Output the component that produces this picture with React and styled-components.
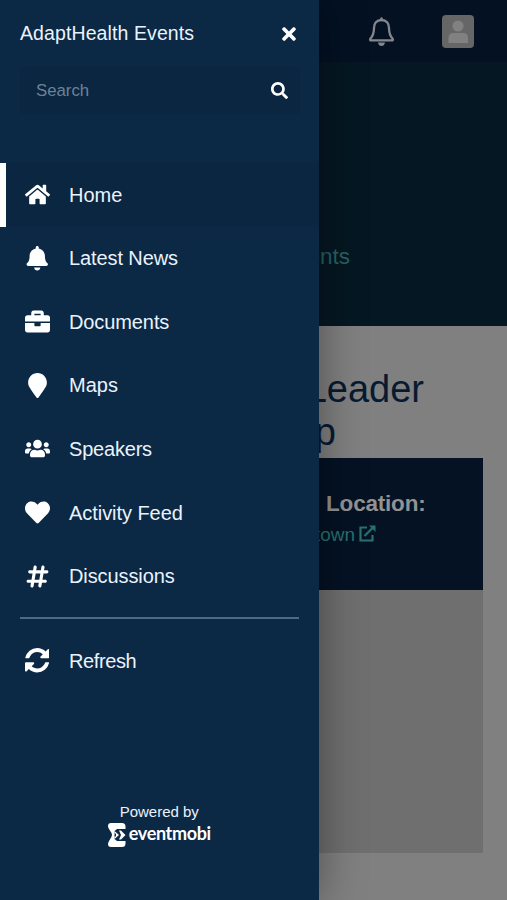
import React from 'react';
import styled, { createGlobalStyle } from 'styled-components';
import { FaHome, FaBell, FaBriefcase, FaMapMarker, FaUsers, FaHeart, FaTimes, FaSearch } from 'react-icons/fa';
import { FaHashtag } from 'react-icons/fa6';

const Global = createGlobalStyle`
  * { box-sizing: border-box; }
  body { margin: 0; background: #808080; font-family: "Liberation Sans", Arial, sans-serif; }
`;

const Screen = styled.div`
  position: relative;
  width: 507px;
  height: 900px;
  overflow: hidden;
  background: #808080;
`;

const Page = styled.div`
  display: flex;
  flex-direction: column;
  height: 100%;
`;

const TopBar = styled.header`
  display: flex;
  flex: none;
  align-items: center;
  justify-content: flex-end;
  gap: 47px;
  height: 62px;
  padding-right: 33px;
  background: #031123;
  svg { display: block; }
`;

const Banner = styled.section`
  flex: none;
  height: 264px;
  padding: 181px 157px 0 0;
  background: #051722;
  color: #286161;
  font-size: 22.5px;
  line-height: 28px;
  text-align: right;
`;

const Title = styled.h1`
  display: flex;
  flex: none;
  flex-direction: column;
  height: 132px;
  margin: 0;
  padding: 42px 83px 0 0;
  color: #081a31;
  font-size: 38px;
  font-weight: 400;
  line-height: 43px;
  text-align: right;
`;

const TitleEnd = styled.span`
  padding-right: 88px;
`;

const InfoCard = styled.section`
  display: flex;
  flex: none;
  flex-direction: column;
  width: 457.5px;
  height: 131.5px;
  margin-left: 25px;
  padding: 32px 57px 0 0;
  background: #041224;
  align-items: flex-end;
`;

const InfoLabel = styled.strong`
  color: #929292;
  font-size: 22.5px;
  line-height: 28px;
  letter-spacing: -0.2px;
`;

const InfoLink = styled.span`
  display: flex;
  gap: 4px;
  margin: 2px 49.5px 0 0;
  color: #297170;
  font-size: 19px;
  line-height: 29px;
  svg { margin-top: 5px; }
`;

const MediaBlock = styled.section`
  flex: none;
  width: 457.5px;
  height: 263.5px;
  margin-left: 25px;
  background: #6f6f6f;
`;

const Drawer = styled.aside`
  position: absolute;
  inset: 0 auto 0 0;
  display: flex;
  flex-direction: column;
  width: 318.5px;
  background: #0b2845;
  color: #eaf3fc;
  box-shadow: 0 0 42px rgba(0, 0, 0, 0.4);
`;

const DrawerHeader = styled.div`
  display: flex;
  flex: none;
  align-items: center;
  justify-content: space-between;
  height: 67px;
  padding: 0 20px 0 20px;
  font-size: 19.5px;
  svg { color: #fff; }
`;

const DrawerTitle = styled.span`
  letter-spacing: 0.1px;
`;

const SearchBox = styled.div`
  display: flex;
  flex: none;
  align-items: center;
  justify-content: space-between;
  height: 47px;
  margin: 0 19px 0 20px;
  padding: 0 12px 0 16px;
  background: #0b2641;
  color: #6c8299;
  font-size: 16.8px;
  svg { color: #fff; }
`;

const Nav = styled.nav`
  display: flex;
  flex: none;
  flex-direction: column;
  margin-top: 49px;
`;

const NavItem = styled.a`
  display: flex;
  align-items: center;
  height: 63.55px;
  border-left: 6px solid ${({ $active }) => ($active ? '#fff' : 'transparent')};
  background: ${({ $active }) => ($active ? '#0b2641' : 'transparent')};
  font-size: 20px;
`;

const IconCell = styled.span`
  display: flex;
  flex: none;
  justify-content: center;
  width: 26px;
  margin: 0 19px 0 18px;
  color: #fff;
`;

const Label = styled.span`
  padding-top: 1px;
  letter-spacing: ${({ $tracking }) => $tracking || 0}px;
`;

const Divider = styled.hr`
  width: 279px;
  height: 2px;
  margin: 9px 0 10px 20px;
  border: 0;
  background: #4b6a85;
`;

const Footer = styled.footer`
  display: flex;
  flex: none;
  flex-direction: column;
  align-items: center;
  margin-top: 110px;
  font-size: 15px;
  line-height: 20px;
`;

const Brand = styled.div`
  display: flex;
  align-items: center;
  gap: 3px;
  height: 25px;
  color: #fff;
`;

const Wordmark = styled.span`
  padding-bottom: 3px;
  font-family: Lato, sans-serif;
  font-size: 18px;
  font-weight: 700;
  line-height: 20px;
  letter-spacing: -0.35px;
`;

const BellOutline = () => (
  <svg width="28" height="31" viewBox="0 0 28 31" fill="none" stroke="#84888d" strokeWidth="2.300" strokeLinejoin="round">
    <path d="M14.500 4C9.500 4 7 7.500 7 12C7 18 5.500 20.500 3.200 23V24.300H25.800V23C23.500 20.500 22 18 22 12C22 7.500 19.500 4 14.500 4Z" />
    <path d="M14.500 2.300V4" strokeLinecap="round" />
    <path d="M11 26.500H18Q17.300 30 14.500 30T11 26.500Z" fill="#84888d" stroke="none" />
  </svg>
);

const Avatar = () => (
  <svg width="32" height="33" viewBox="0 0 32 33">
    <rect width="32" height="33" rx="4" fill="#666" />
    <circle cx="16" cy="11" r="5.600" fill="#818181" />
    <path d="M6.500 28V23Q6.500 18 11.500 18H21Q26 18 26 23V28Z" fill="#818181" />
  </svg>
);

const ExternalLink = () => (
  <svg width="17" height="17" viewBox="0 0 17 17" fill="none" stroke="currentColor" strokeWidth="2.200">
    <path d="M8 2.500H1.500V15.500H13.500V10M5.500 11L14 2.500" />
    <path d="M10 .5H16.500V7Z" fill="currentColor" stroke="none" />
  </svg>
);

const RefreshIcon = () => (
  <svg width="24.500" height="24.500" viewBox="0 0 1536 1536" fill="currentColor">
    <path d="M1511 928q0 5-1 7-64 268-268 434.500T764 1536q-146 0-282.500-55T238 1324l-129 129q-19 19-45 19t-45-19-19-45V960q0-26 19-45t45-19h448q26 0 45 19t19 45-19 45l-137 137q71 66 161 102t187 36q134 0 250-65t186-179q11-17 53-117 8-23 30-23h192q13 0 22.500 9.500t9.500 22.500zm25-800v448q0 26-19 45t-45 19h-448q-26 0-45-19t-19-45 19-45l138-138Q969 256 768 256q-134 0-250 65T332 500q-11 17-53 117-8 23-30 23H50q-13 0-22.500-9.500T18 608v-7q65-268 270-434.500T768 0q146 0 284 55.500T1297 212l130-129q19-19 45-19t45 19 19 45z" />
  </svg>
);

const BrandMark = () => (
  <svg width="18" height="24" viewBox="0 0 18 24">
    <path d="M3 0H14Q17.500 0 17.500 3.500V6H9L6.500 8V16L9 18H17.500V20.500Q17.500 24 14 24H3Q0 24 0 21Q0 19.500 1.300 17.500Q4 14 4 12T1.300 6.500Q0 4.500 0 3Q0 0 3 0Z" fill="#fff" />
    <path d="M6.500 8L11 12L6.500 16V13.500H8V10.500H6.500Z" fill="#fff" />
    <path d="M11 7.500H13L17.500 12L13 16.500H11L13 12Z" fill="#fff" />
  </svg>
);

const items = [
  { label: 'Home', icon: <FaHome size={25} />, active: true },
  { label: 'Latest News', icon: <FaBell size={24.5} />, tracking: -0.1 },
  { label: 'Documents', icon: <FaBriefcase size={25} />, tracking: -0.1 },
  { label: 'Maps', icon: <FaMapMarker size={25} /> },
  { label: 'Speakers', icon: <FaUsers size={25} />, tracking: -0.2 },
  { label: 'Activity Feed', icon: <FaHeart size={25} />, tracking: -0.05 },
  { label: 'Discussions', icon: <FaHashtag size={25} />, tracking: -0.1 },
];

export default function App() {
  return (
    <>
      <Global />
      <Screen>
        <Page>
          <TopBar><BellOutline /><Avatar /></TopBar>
          <Banner>Events</Banner>
          <Title><span>Leader</span><TitleEnd>p</TitleEnd></Title>
          <InfoCard>
            <InfoLabel>Location:</InfoLabel>
            <InfoLink>town <ExternalLink /></InfoLink>
          </InfoCard>
          <MediaBlock />
        </Page>
        <Drawer>
          <DrawerHeader>
            <DrawerTitle>AdaptHealth Events</DrawerTitle>
            <FaTimes size={20} />
          </DrawerHeader>
          <SearchBox>Search<FaSearch size={17} /></SearchBox>
          <Nav>
            {items.map(({ label, icon, active, tracking }) => (
              <NavItem key={label} $active={active}>
                <IconCell>{icon}</IconCell>
                <Label $tracking={tracking}>{label}</Label>
              </NavItem>
            ))}
            <Divider />
            <NavItem>
              <IconCell><RefreshIcon /></IconCell>
              <Label $tracking={-0.4}>Refresh</Label>
            </NavItem>
          </Nav>
          <Footer>
            <span>Powered by</span>
            <Brand><BrandMark /><Wordmark>eventmobi</Wordmark></Brand>
          </Footer>
        </Drawer>
      </Screen>
    </>
  );
}
